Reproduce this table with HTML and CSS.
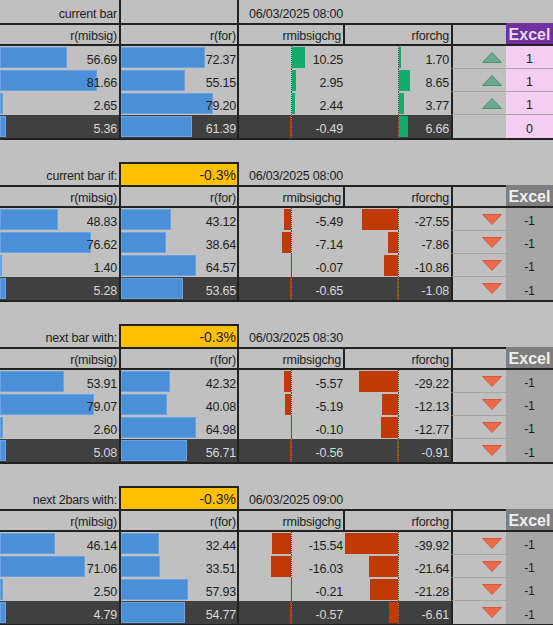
FILE: index.html
```html
<!DOCTYPE html>
<html lang="en">
<head>
    <meta charset="UTF-8">
    <meta name="viewport" content="width=device-width, initial-scale=1.0">
    <title>Bar signals</title>
    <link rel="stylesheet" href="styles.css">
</head>
<body>
<div class="sheet">

    <!-- current bar -->
    <section class="block">
        <div class="cell"><span class="txt">current bar</span></div>
        <div class="cell bcol"></div>
        <div class="cell"><span class="txt">06/03/2025 08:00</span></div>
        <div class="cell"></div>
        <div class="cell"></div>
        <div class="cell"></div>

        <div class="cell hd"><span class="txt">r(mibsig)</span></div>
        <div class="cell hd bcol"><span class="txt">r(for)</span></div>
        <div class="cell hd hd-sep"><span class="txt">rmibsigchg</span></div>
        <div class="cell hd"><span class="txt">rforchg</span></div>
        <div class="cell hd ecol"></div>
        <div class="cell hd xl on"><span class="xl-txt">Excel</span></div>

        <div class="cell"><div class="bar blue" style="width:56.69%"></div><span class="txt">56.69</span></div>
        <div class="cell bcol"><div class="bar blue" style="width:72.37%"></div><span class="txt">72.37</span></div>
        <div class="cell"><div class="axis"><div class="neg"></div><div class="pos"><div class="bar green" style="width:12.8px"></div></div></div><span class="txt">10.25</span></div>
        <div class="cell"><div class="axis wide"><div class="neg"></div><div class="pos"><div class="bar green" style="width:2.2px"></div></div></div><span class="txt">1.70</span></div>
        <div class="cell ecol sep"><svg class="tri" width="20" height="11" viewBox="0 0 20 11"><polygon class="up" points="0.5,10.5 10,0.5 19.5,10.5"/></svg></div>
        <div class="cell flag on sep"><span class="txt mid">1</span></div>

        <div class="cell"><div class="bar blue" style="width:81.66%"></div><span class="txt">81.66</span></div>
        <div class="cell bcol"><div class="bar blue" style="width:55.15%"></div><span class="txt">55.15</span></div>
        <div class="cell"><div class="axis"><div class="neg"></div><div class="pos"><div class="bar green" style="width:3.7px"></div></div></div><span class="txt">2.95</span></div>
        <div class="cell"><div class="axis wide"><div class="neg"></div><div class="pos"><div class="bar green" style="width:11.4px"></div></div></div><span class="txt">8.65</span></div>
        <div class="cell ecol sep"><svg class="tri" width="20" height="11" viewBox="0 0 20 11"><polygon class="up" points="0.5,10.5 10,0.5 19.5,10.5"/></svg></div>
        <div class="cell flag on sep"><span class="txt mid">1</span></div>

        <div class="cell"><div class="bar blue" style="width:2.65%"></div><span class="txt">2.65</span></div>
        <div class="cell bcol"><div class="bar blue" style="width:79.20%"></div><span class="txt">79.20</span></div>
        <div class="cell"><div class="axis"><div class="neg"></div><div class="pos"><div class="bar green" style="width:3.1px"></div></div></div><span class="txt">2.44</span></div>
        <div class="cell"><div class="axis wide"><div class="neg"></div><div class="pos"><div class="bar green" style="width:5px"></div></div></div><span class="txt">3.77</span></div>
        <div class="cell ecol sep"><svg class="tri" width="20" height="11" viewBox="0 0 20 11"><polygon class="up" points="0.5,10.5 10,0.5 19.5,10.5"/></svg></div>
        <div class="cell flag on sep"><span class="txt mid">1</span></div>

        <div class="cell dark"><div class="bar blue" style="width:5.36%"></div><span class="txt">5.36</span></div>
        <div class="cell dark bcol"><div class="bar blue" style="width:61.39%"></div><span class="txt">61.39</span></div>
        <div class="cell dark"><div class="axis"><div class="neg"><div class="bar red" style="width:0.6px"></div></div><div class="pos"></div></div><span class="txt">-0.49</span></div>
        <div class="cell dark"><div class="axis wide"><div class="neg"></div><div class="pos"><div class="bar green" style="width:8.8px"></div></div></div><span class="txt">6.66</span></div>
        <div class="cell ecol"></div>
        <div class="cell flag on"><span class="txt mid">0</span></div>
    </section>

    <!-- current bar if -->
    <section class="block">
        <div class="cell"><span class="txt">current bar if:</span></div>
        <div class="cell bcol pct"><span class="pct-txt">-0.3%</span></div>
        <div class="cell"><span class="txt">06/03/2025 08:00</span></div>
        <div class="cell"></div>
        <div class="cell"></div>
        <div class="cell"></div>

        <div class="cell hd"><span class="txt">r(mibsig)</span></div>
        <div class="cell hd bcol"><span class="txt">r(for)</span></div>
        <div class="cell hd hd-sep"><span class="txt">rmibsigchg</span></div>
        <div class="cell hd"><span class="txt">rforchg</span></div>
        <div class="cell hd ecol"></div>
        <div class="cell hd xl off"><span class="xl-txt">Excel</span></div>

        <div class="cell"><div class="bar blue" style="width:48.83%"></div><span class="txt">48.83</span></div>
        <div class="cell bcol"><div class="bar blue" style="width:43.12%"></div><span class="txt">43.12</span></div>
        <div class="cell"><div class="axis"><div class="neg"><div class="bar red" style="width:6.9px"></div></div><div class="pos"></div></div><span class="txt">-5.49</span></div>
        <div class="cell"><div class="axis wide"><div class="neg"><div class="bar red" style="width:36.4px"></div></div><div class="pos"></div></div><span class="txt">-27.55</span></div>
        <div class="cell ecol sep"><svg class="tri" width="20" height="11" viewBox="0 0 20 11"><polygon class="down" points="0.5,0.5 19.5,0.5 10,10.5"/></svg></div>
        <div class="cell flag off sep"><span class="txt mid">-1</span></div>

        <div class="cell"><div class="bar blue" style="width:76.62%"></div><span class="txt">76.62</span></div>
        <div class="cell bcol"><div class="bar blue" style="width:38.64%"></div><span class="txt">38.64</span></div>
        <div class="cell"><div class="axis"><div class="neg"><div class="bar red" style="width:8.9px"></div></div><div class="pos"></div></div><span class="txt">-7.14</span></div>
        <div class="cell"><div class="axis wide"><div class="neg"><div class="bar red" style="width:10.4px"></div></div><div class="pos"></div></div><span class="txt">-7.86</span></div>
        <div class="cell ecol sep"><svg class="tri" width="20" height="11" viewBox="0 0 20 11"><polygon class="down" points="0.5,0.5 19.5,0.5 10,10.5"/></svg></div>
        <div class="cell flag off sep"><span class="txt mid">-1</span></div>

        <div class="cell"><div class="bar blue" style="width:1.40%"></div><span class="txt">1.40</span></div>
        <div class="cell bcol"><div class="bar blue" style="width:64.57%"></div><span class="txt">64.57</span></div>
        <div class="cell"><div class="axis"><div class="neg"><div class="bar red" style="width:0.1px"></div></div><div class="pos"></div></div><span class="txt">-0.07</span></div>
        <div class="cell"><div class="axis wide"><div class="neg"><div class="bar red" style="width:14.3px"></div></div><div class="pos"></div></div><span class="txt">-10.86</span></div>
        <div class="cell ecol sep"><svg class="tri" width="20" height="11" viewBox="0 0 20 11"><polygon class="down" points="0.5,0.5 19.5,0.5 10,10.5"/></svg></div>
        <div class="cell flag off sep"><span class="txt mid">-1</span></div>

        <div class="cell dark"><div class="bar blue" style="width:5.28%"></div><span class="txt">5.28</span></div>
        <div class="cell dark bcol"><div class="bar blue" style="width:53.65%"></div><span class="txt">53.65</span></div>
        <div class="cell dark"><div class="axis"><div class="neg"><div class="bar red" style="width:0.8px"></div></div><div class="pos"></div></div><span class="txt">-0.65</span></div>
        <div class="cell dark"><div class="axis wide"><div class="neg"><div class="bar red" style="width:1.4px"></div></div><div class="pos"></div></div><span class="txt">-1.08</span></div>
        <div class="cell ecol"><svg class="tri" width="20" height="11" viewBox="0 0 20 11"><polygon class="down" points="0.5,0.5 19.5,0.5 10,10.5"/></svg></div>
        <div class="cell flag off"><span class="txt mid">-1</span></div>
    </section>

    <!-- next bar with -->
    <section class="block">
        <div class="cell"><span class="txt">next bar with:</span></div>
        <div class="cell bcol pct"><span class="pct-txt">-0.3%</span></div>
        <div class="cell"><span class="txt">06/03/2025 08:30</span></div>
        <div class="cell"></div>
        <div class="cell"></div>
        <div class="cell"></div>

        <div class="cell hd"><span class="txt">r(mibsig)</span></div>
        <div class="cell hd bcol"><span class="txt">r(for)</span></div>
        <div class="cell hd hd-sep"><span class="txt">rmibsigchg</span></div>
        <div class="cell hd"><span class="txt">rforchg</span></div>
        <div class="cell hd ecol"></div>
        <div class="cell hd xl off"><span class="xl-txt">Excel</span></div>

        <div class="cell"><div class="bar blue" style="width:53.91%"></div><span class="txt">53.91</span></div>
        <div class="cell bcol"><div class="bar blue" style="width:42.32%"></div><span class="txt">42.32</span></div>
        <div class="cell"><div class="axis"><div class="neg"><div class="bar red" style="width:7px"></div></div><div class="pos"></div></div><span class="txt">-5.57</span></div>
        <div class="cell"><div class="axis wide"><div class="neg"><div class="bar red" style="width:38.6px"></div></div><div class="pos"></div></div><span class="txt">-29.22</span></div>
        <div class="cell ecol sep"><svg class="tri" width="20" height="11" viewBox="0 0 20 11"><polygon class="down" points="0.5,0.5 19.5,0.5 10,10.5"/></svg></div>
        <div class="cell flag off sep"><span class="txt mid">-1</span></div>

        <div class="cell"><div class="bar blue" style="width:79.07%"></div><span class="txt">79.07</span></div>
        <div class="cell bcol"><div class="bar blue" style="width:40.08%"></div><span class="txt">40.08</span></div>
        <div class="cell"><div class="axis"><div class="neg"><div class="bar red" style="width:6.5px"></div></div><div class="pos"></div></div><span class="txt">-5.19</span></div>
        <div class="cell"><div class="axis wide"><div class="neg"><div class="bar red" style="width:16px"></div></div><div class="pos"></div></div><span class="txt">-12.13</span></div>
        <div class="cell ecol sep"><svg class="tri" width="20" height="11" viewBox="0 0 20 11"><polygon class="down" points="0.5,0.5 19.5,0.5 10,10.5"/></svg></div>
        <div class="cell flag off sep"><span class="txt mid">-1</span></div>

        <div class="cell"><div class="bar blue" style="width:2.60%"></div><span class="txt">2.60</span></div>
        <div class="cell bcol"><div class="bar blue" style="width:64.98%"></div><span class="txt">64.98</span></div>
        <div class="cell"><div class="axis"><div class="neg"><div class="bar red" style="width:0.1px"></div></div><div class="pos"></div></div><span class="txt">-0.10</span></div>
        <div class="cell"><div class="axis wide"><div class="neg"><div class="bar red" style="width:16.9px"></div></div><div class="pos"></div></div><span class="txt">-12.77</span></div>
        <div class="cell ecol sep"><svg class="tri" width="20" height="11" viewBox="0 0 20 11"><polygon class="down" points="0.5,0.5 19.5,0.5 10,10.5"/></svg></div>
        <div class="cell flag off sep"><span class="txt mid">-1</span></div>

        <div class="cell dark"><div class="bar blue" style="width:5.08%"></div><span class="txt">5.08</span></div>
        <div class="cell dark bcol"><div class="bar blue" style="width:56.71%"></div><span class="txt">56.71</span></div>
        <div class="cell dark"><div class="axis"><div class="neg"><div class="bar red" style="width:0.7px"></div></div><div class="pos"></div></div><span class="txt">-0.56</span></div>
        <div class="cell dark"><div class="axis wide"><div class="neg"><div class="bar red" style="width:1.2px"></div></div><div class="pos"></div></div><span class="txt">-0.91</span></div>
        <div class="cell ecol"><svg class="tri" width="20" height="11" viewBox="0 0 20 11"><polygon class="down" points="0.5,0.5 19.5,0.5 10,10.5"/></svg></div>
        <div class="cell flag off"><span class="txt mid">-1</span></div>
    </section>

    <!-- next 2 bars with -->
    <section class="block">
        <div class="cell"><span class="txt">next 2bars with:</span></div>
        <div class="cell bcol pct"><span class="pct-txt">-0.3%</span></div>
        <div class="cell"><span class="txt">06/03/2025 09:00</span></div>
        <div class="cell"></div>
        <div class="cell"></div>
        <div class="cell"></div>

        <div class="cell hd"><span class="txt">r(mibsig)</span></div>
        <div class="cell hd bcol"><span class="txt">r(for)</span></div>
        <div class="cell hd hd-sep"><span class="txt">rmibsigchg</span></div>
        <div class="cell hd"><span class="txt">rforchg</span></div>
        <div class="cell hd ecol"></div>
        <div class="cell hd xl off"><span class="xl-txt">Excel</span></div>

        <div class="cell"><div class="bar blue" style="width:46.14%"></div><span class="txt">46.14</span></div>
        <div class="cell bcol"><div class="bar blue" style="width:32.44%"></div><span class="txt">32.44</span></div>
        <div class="cell"><div class="axis"><div class="neg"><div class="bar red" style="width:19.4px"></div></div><div class="pos"></div></div><span class="txt">-15.54</span></div>
        <div class="cell"><div class="axis wide"><div class="neg"><div class="bar red" style="width:52.7px"></div></div><div class="pos"></div></div><span class="txt">-39.92</span></div>
        <div class="cell ecol sep"><svg class="tri" width="20" height="11" viewBox="0 0 20 11"><polygon class="down" points="0.5,0.5 19.5,0.5 10,10.5"/></svg></div>
        <div class="cell flag off sep"><span class="txt mid">-1</span></div>

        <div class="cell"><div class="bar blue" style="width:71.06%"></div><span class="txt">71.06</span></div>
        <div class="cell bcol"><div class="bar blue" style="width:33.51%"></div><span class="txt">33.51</span></div>
        <div class="cell"><div class="axis"><div class="neg"><div class="bar red" style="width:20px"></div></div><div class="pos"></div></div><span class="txt">-16.03</span></div>
        <div class="cell"><div class="axis wide"><div class="neg"><div class="bar red" style="width:28.6px"></div></div><div class="pos"></div></div><span class="txt">-21.64</span></div>
        <div class="cell ecol sep"><svg class="tri" width="20" height="11" viewBox="0 0 20 11"><polygon class="down" points="0.5,0.5 19.5,0.5 10,10.5"/></svg></div>
        <div class="cell flag off sep"><span class="txt mid">-1</span></div>

        <div class="cell"><div class="bar blue" style="width:2.50%"></div><span class="txt">2.50</span></div>
        <div class="cell bcol"><div class="bar blue" style="width:57.93%"></div><span class="txt">57.93</span></div>
        <div class="cell"><div class="axis"><div class="neg"><div class="bar red" style="width:0.3px"></div></div><div class="pos"></div></div><span class="txt">-0.21</span></div>
        <div class="cell"><div class="axis wide"><div class="neg"><div class="bar red" style="width:28.1px"></div></div><div class="pos"></div></div><span class="txt">-21.28</span></div>
        <div class="cell ecol sep"><svg class="tri" width="20" height="11" viewBox="0 0 20 11"><polygon class="down" points="0.5,0.5 19.5,0.5 10,10.5"/></svg></div>
        <div class="cell flag off sep"><span class="txt mid">-1</span></div>

        <div class="cell dark"><div class="bar blue" style="width:4.79%"></div><span class="txt">4.79</span></div>
        <div class="cell dark bcol"><div class="bar blue" style="width:54.77%"></div><span class="txt">54.77</span></div>
        <div class="cell dark"><div class="axis"><div class="neg"><div class="bar red" style="width:0.7px"></div></div><div class="pos"></div></div><span class="txt">-0.57</span></div>
        <div class="cell dark"><div class="axis wide"><div class="neg"><div class="bar red" style="width:8.7px"></div></div><div class="pos"></div></div><span class="txt">-6.61</span></div>
        <div class="cell ecol"><svg class="tri" width="20" height="11" viewBox="0 0 20 11"><polygon class="down" points="0.5,0.5 19.5,0.5 10,10.5"/></svg></div>
        <div class="cell flag off"><span class="txt mid">-1</span></div>
    </section>

</div>
</body>
</html>
```

FILE: styles.css
```css
body {
    margin: 0;
    background-color: #c0c0c0;
    font-family: "Liberation Sans", Arial, sans-serif;
    font-size: 12.5px;
    color: #1e1e1e;
}

.sheet {
    width: 553px;
}

.block {
    display: grid;
    grid-template-columns: 119px 120px 106px 106px 55px 47px;
    grid-template-rows: repeat(6, 23px);
    border-bottom: 2px solid #222;
    margin-bottom: 22px;
}

.cell {
    display: grid;
    min-width: 0;
    overflow: hidden;
    white-space: nowrap;
    box-sizing: border-box;
}

.cell > * {
    grid-area: 1 / 1;
}

.txt {
    justify-self: end;
    align-self: end;
    line-height: 14px;
    padding: 0 2px 2px 0;
    letter-spacing: -0.2px;
    position: relative;
}

.txt.mid {
    justify-self: center;
    padding-right: 0;
}

.bcol {
    border-left: 2px solid #222;
    border-right: 2px solid #222;
}

.bcol .txt {
    padding-right: 1px;
}

.pct {
    background-color: #ffc000;
    border-top: 2px solid #222;
}

.pct-txt {
    justify-self: end;
    align-self: end;
    font-size: 14px;
    line-height: 16px;
    padding: 0 1px 2px 0;
}

.hd {
    border-top: 2px solid #222;
    border-bottom: 2px solid #222;
}

.hd .txt {
    padding-bottom: 1px;
}

.hd-sep {
    border-right: 2px solid #222;
}

.ecol {
    border-left: 2px solid #222;
}

.sep {
    border-bottom: 1px solid #a4a4a4;
}

.xl {
    border-top-color: transparent;
}

.xl.on {
    background-color: #7030a0;
    color: #e6dcf0;
}

.xl.off {
    background-color: #7f7f7f;
    color: #efefef;
}

.xl-txt {
    justify-self: center;
    align-self: center;
    font-size: 16px;
    font-weight: bold;
    line-height: 18px;
    margin-top: 1px;
}

.flag.on {
    background-color: #f2cef0;
}

.flag.off {
    background-color: #a6a6a6;
}

.dark {
    background-color: #404040;
    color: #d9d9d9;
}

.bar {
    align-self: center;
    justify-self: start;
    height: 21px;
    box-sizing: border-box;
}

.blue {
    background-color: #4a8fd8;
    border: 1px solid #6aa3e0;
}

.green {
    background-color: #12ad6a;
}

.red {
    background-color: #c03a06;
}

.axis {
    display: flex;
    height: 100%;
}

.neg {
    width: 52px;
    display: flex;
    justify-content: flex-end;
    align-items: center;
}

.wide .neg {
    width: 53px;
}

.pos {
    flex: 1;
    display: flex;
    align-items: center;
    border-left: 1px dotted #4a4a4a;
}

.dark .pos {
    border-left-color: #e0581a;
}

.tri {
    justify-self: end;
    align-self: center;
    margin-right: 4px;
}

.tri .up {
    fill: #68aa8e;
    stroke: #4f8f74;
    stroke-width: 1;
}

.tri .down {
    fill: #e96b4c;
    stroke: #d85a3c;
    stroke-width: 1;
}
```
